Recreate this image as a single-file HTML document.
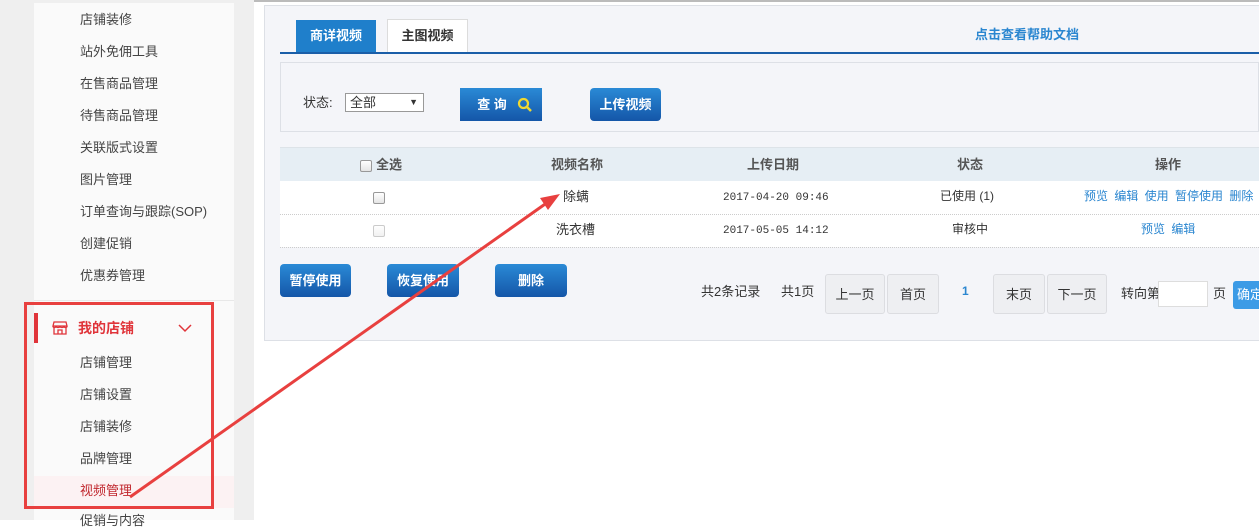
<!DOCTYPE html>
<html><head><meta charset="utf-8"><style>
*{margin:0;padding:0;box-sizing:border-box}
body{width:1259px;height:520px;overflow:hidden;background:#fff;font-family:"Liberation Sans","Noto Sans CJK SC",sans-serif;font-size:13px;color:#333;position:relative;line-height:1.15}
.a{position:absolute}
.side{left:0;top:0;width:254px;height:520px;background:#efefef}
.sb{left:34px;top:3px;width:200px;height:517px;background:#fafafa}
.mi{position:absolute;left:80px;font-size:13px;color:#444}
.panel{left:264px;top:5px;width:1000px;height:336px;background:#f4f5f9;border:1px solid #dde0e6}
.btn{position:absolute;color:#fff;font-weight:bold;font-size:13px;text-align:center;background:linear-gradient(#2a8ad6,#1456a8);border-radius:4px}
.th{position:absolute;top:158px;font-weight:bold;color:#555;font-size:13px}
.c{position:absolute;font-size:12px}
.lk{color:#2a86d0;word-spacing:3px}
.pg{position:absolute;top:274px;height:40px;background:#eeeff2;border:1px solid #dcdde1;border-radius:3px;text-align:center;line-height:40px;font-size:13px}
.cb{position:absolute;width:12px;height:12px;border:1px solid #999;border-radius:2px;background:linear-gradient(#fff,#e5e5e5)}
</style></head><body>
<div class="a" style="left:0;top:0;width:1259px;height:2px;background:#bbb"></div>
<div class="a side"></div>
<div class="a sb"></div>
<div class="mi" style="top:13px">店铺装修</div>
<div class="mi" style="top:45px">站外免佣工具</div>
<div class="mi" style="top:77px">在售商品管理</div>
<div class="mi" style="top:109px">待售商品管理</div>
<div class="mi" style="top:141px">关联版式设置</div>
<div class="mi" style="top:173px">图片管理</div>
<div class="mi" style="top:205px">订单查询与跟踪(SOP)</div>
<div class="mi" style="top:237px">创建促销</div>
<div class="mi" style="top:269px">优惠券管理</div>
<div class="a" style="left:34px;top:300px;width:200px;height:1px;background:#e8e8e8"></div>
<div class="a" style="left:34px;top:313px;width:4px;height:30px;background:#e0343a"></div>
<svg class="a" style="left:52px;top:320px" width="16" height="16" viewBox="0 0 16 16" fill="none" stroke="#e0343a" stroke-width="1.3"><path d="M2 2h12l1 4H1zM1 6c0 2 3 2 3 0 0 2 4 2 4 0 0 2 4 2 4 0 0 2 3 2 3 0M2 8v6h12V8M6 14v-4h4v4"/></svg>
<div class="a" style="left:78px;top:320px;font-weight:bold;color:#e0343a;font-size:14px">我的店铺</div>
<svg class="a" style="left:177px;top:322px" width="16" height="12"><path d="M2 3l6 6 6-6" stroke="#e0343a" stroke-width="1.5" fill="none"/></svg>
<div class="mi" style="top:356px">店铺管理</div>
<div class="mi" style="top:388px">店铺设置</div>
<div class="mi" style="top:420px">店铺装修</div>
<div class="mi" style="top:452px">品牌管理</div>
<div class="a" style="left:34px;top:476px;width:200px;height:32px;background:#fcf2f3"></div>
<div class="mi" style="top:484px;color:#c0272d">视频管理</div>
<div class="mi" style="top:514px">促销与内容</div>
<div class="a" style="left:24px;top:302px;width:190px;height:207px;border:3px solid #e8403f"></div>

<div class="a panel"></div>
<div class="a" style="left:296px;top:20px;width:80px;height:33px;background:#1f7fcb;color:#fff;font-weight:bold;text-align:center;line-height:31px">商详视频</div>
<div class="a" style="left:387px;top:19px;width:81px;height:34px;background:#fff;border:1px solid #dcdcdc;border-bottom:none;font-weight:bold;text-align:center;line-height:32px;color:#333">主图视频</div>
<div class="a" style="left:280px;top:52px;width:979px;height:2px;background:#1a5ea8"></div>
<div class="a" style="left:975px;top:28px;color:#2a86d0;font-weight:bold">点击查看帮助文档</div>
<div class="a" style="left:280px;top:62px;width:979px;height:70px;border:1px solid #dde0e6;background:#f4f5f9"></div>
<div class="a" style="left:303px;top:96px">状态:</div>
<div class="a" style="left:345px;top:93px;width:79px;height:19px;border:1px solid #999;background:#fff;padding-left:4px;line-height:17px">全部<span style="position:absolute;right:5px;font-size:9px">▼</span></div>
<div class="btn" style="left:460px;top:88px;width:82px;height:33px;line-height:33px;border-radius:0;padding-right:18px">查 询</div>
<svg class="a" style="left:517px;top:97px" width="16" height="16"><circle cx="6.5" cy="6.5" r="4.5" stroke="#f0d830" stroke-width="2.2" fill="none"/><path d="M10 10l4 4" stroke="#f0d830" stroke-width="2.5"/></svg>
<div class="btn" style="left:590px;top:88px;width:71px;height:33px;line-height:33px">上传视频</div>

<div class="a" style="left:280px;top:147px;width:979px;height:34px;background:#e6eef4;border-top:1px solid #dde3e8"></div>
<div class="cb" style="left:360px;top:160px"></div>
<div class="th" style="left:376px">全选</div>
<div class="th" style="left:551px">视频名称</div>
<div class="th" style="left:747px">上传日期</div>
<div class="th" style="left:957px">状态</div>
<div class="th" style="left:1155px">操作</div>
<div class="a" style="left:280px;top:181px;width:979px;height:66px;background:#fff"></div>
<div class="a" style="left:280px;top:214px;width:979px;border-top:1px dotted #ccc"></div>
<div class="a" style="left:280px;top:247px;width:979px;border-top:1px dotted #ccc"></div>
<div class="cb" style="left:373px;top:192px"></div>
<div class="cb" style="left:373px;top:225px;opacity:.5"></div>
<div class="c" style="left:563px;top:190px;font-size:13px">除螨</div>
<div class="c" style="left:556px;top:223px;font-size:13px">洗衣槽</div>
<div class="c" style="left:723px;top:192px;font-family:'Liberation Mono',monospace;font-size:11px">2017-04-20 09:46</div>
<div class="c" style="left:723px;top:225px;font-family:'Liberation Mono',monospace;font-size:11px">2017-05-05 14:12</div>
<div class="c" style="left:940px;top:190px">已使用 (1)</div>
<div class="c" style="left:952px;top:223px">审核中</div>
<div class="c lk" style="left:1084px;top:190px">预览 编辑 使用 暂停使用 删除</div>
<div class="c lk" style="left:1141px;top:223px">预览 编辑</div>

<div class="btn" style="left:280px;top:264px;width:71px;height:33px;line-height:33px">暂停使用</div>
<div class="btn" style="left:387px;top:264px;width:72px;height:33px;line-height:33px">恢复使用</div>
<div class="btn" style="left:495px;top:264px;width:72px;height:33px;line-height:33px">删除</div>
<div class="a" style="left:701px;top:285px">共2条记录</div>
<div class="a" style="left:781px;top:285px">共1页</div>
<div class="pg" style="left:825px;width:60px">上一页</div>
<div class="pg" style="left:887px;width:52px">首页</div>
<div class="a" style="left:962px;top:285px;color:#2a86d0;font-weight:bold;font-size:12px">1</div>
<div class="pg" style="left:993px;width:52px">末页</div>
<div class="pg" style="left:1047px;width:60px">下一页</div>
<div class="a" style="left:1121px;top:287px">转向第</div>
<div class="a" style="left:1158px;top:281px;width:50px;height:26px;background:#fff;border:1px solid #ddd"></div>
<div class="a" style="left:1213px;top:287px">页</div>
<div class="a" style="left:1233px;top:281px;width:40px;height:28px;background:#3c9be6;border-radius:3px;color:#fff;line-height:28px;padding-left:4px">确定</div>

<svg class="a" style="left:0;top:0" width="1259" height="520"><line x1="130" y1="497" x2="548" y2="202" stroke="#e8403f" stroke-width="3"/><path d="M560 194L540 198L548 210Z" fill="#e8403f"/></svg>
</body></html>
